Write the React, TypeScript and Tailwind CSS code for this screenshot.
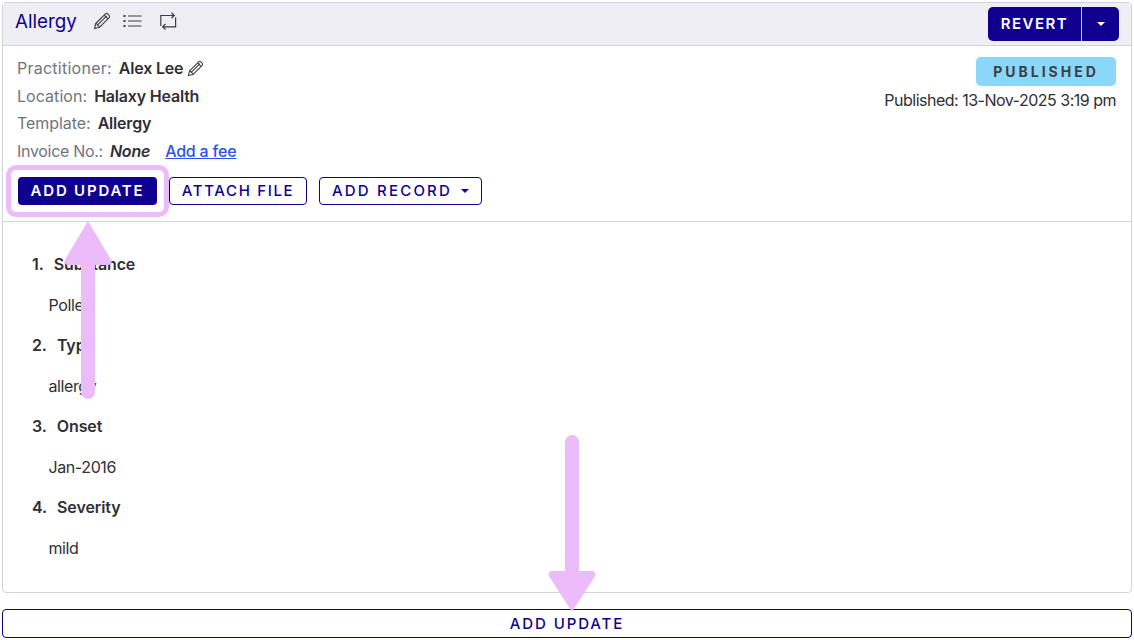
import React from 'react';

const font = { fontFamily: 'Inter, "Liberation Sans", sans-serif' };

function Pencil({ className }: { className?: string }) {
  return (
    <svg viewBox="0 0 18 18" fill="none" stroke="currentColor" strokeWidth="1.1" strokeLinejoin="round" className={className}>
      <path d="M1.5 16.5l1.2-5L12.4 1.900a1.600 1.600 0 0 1 2.200 0l1.500 1.500a1.600 1.600 0 0 1 0 2.200L6.500 15.300z" />
      <path d="M2.700 11.500c1 0 1.600.5 1.700 1.700 1.200.1 2 .8 2.100 2.100M4.400 13.200L13.800 3.800M11.200 3.100l3.700 3.700" />
    </svg>
  );
}

function ListIcon() {
  return (
    <svg viewBox="0 0 19 14" className="w-[19px] h-[14px] text-[#3c3c48]" fill="none" stroke="currentColor">
      <path d="M5 2h13.500M5 7h13.500M5 12h13.500" strokeWidth="1.100" />
      <path d="M0.500 2h2M0.500 7h2M0.500 12h2" strokeWidth="1.800" />
    </svg>
  );
}

function RepeatIcon() {
  return (
    <svg viewBox="0 0 17 18" className="w-[17px] h-[18px] text-[#3c3c48]" fill="none" stroke="currentColor" strokeWidth="1.200">
      <path d="M0.800 14V3.500H14M11.500 0.800l2.800 2.700-2.800 2.700" />
      <path d="M15.600 5.500v9.300H3M5.500 12l-2.800 2.800 2.800 2.700" />
    </svg>
  );
}

function Caret({ color }: { color: string }) {
  return <span className={`inline-block w-0 h-0 border-x-[4px] border-x-transparent border-t-[4px] ${color}`} />;
}

function Row({ label, labelClass, children }: { label: string; labelClass?: string; children: React.ReactNode }) {
  return (
    <div className="h-[27.500px] flex items-center text-[16px] tracking-[-0.2px]">
      <span className={`text-[#71747d] mr-[7px] ${labelClass ?? ''}`}>{label}</span>
      {children}
    </div>
  );
}

const outlineBtn = 'h-[28px] rounded-[4px] border border-[#100090] bg-white text-[#100090] text-[15px] font-medium flex items-center justify-center';

const fields = [
  { n: '1.', label: 'Substance', value: 'Pollen' },
  { n: '2.', label: 'Type', value: 'allergy' },
  { n: '3.', label: 'Onset', value: 'Jan-2016' },
  { n: '4.', label: 'Severity', value: 'mild' },
];

export default function App() {
  return (
    <div style={font} className="relative w-[1134px] h-[640px] overflow-hidden bg-white text-[#2f2f35] px-[2px] pt-[2px]">
      <div className="h-[591px] rounded-[4px] border border-[#d0d4dc] flex flex-col">
        {/* Header */}
        <div className="h-[43px] shrink-0 bg-[#eeeef4] border-b border-[#d0d4dc] flex items-center justify-between pl-[12px] pr-[12px]">
          <div className="flex items-center -mt-[4px]">
            <h1 className="text-[18.800px] text-[#100090] mr-[16px]">Allergy</h1>
            <div className="flex items-center -mt-[3px]">
              <Pencil className="w-[18px] h-[18px] text-[#3c3c48] mr-[12px]" />
              <ListIcon />
              <span className="w-[18px]" />
              <RepeatIcon />
            </div>
          </div>
          <div className="h-[34px] w-[131px] rounded-[5px] bg-[#100090] text-white flex items-center">
            <span className="w-[93px] text-center text-[15px] font-semibold tracking-[1.500px]">REVERT</span>
            <span className="w-px h-full bg-[#c9c9e6]" />
            <span className="flex-1 flex justify-center"><Caret color="border-t-white" /></span>
          </div>
        </div>

        {/* Meta */}
        <div className="h-[176px] shrink-0 border-b border-[#d0d4dc] pl-[14px] pr-[15px] pt-[8.500px]">
          <div className="flex justify-between">
            <div>
              <Row label="Practitioner:" labelClass="tracking-[0.25px]">
                <b className="font-semibold">Alex Lee</b>
                <Pencil className="w-[17px] h-[17px] ml-[4px] text-[#3c3c48]" />
              </Row>
              <Row label="Location:" labelClass="tracking-[0.05px]"><b className="font-semibold">Halaxy Health</b></Row>
              <Row label="Template:" labelClass="tracking-[-0.05px]"><b className="font-semibold">Allergy</b></Row>
              <Row label="Invoice No.:" labelClass="tracking-[-0.3px]">
                <b className="font-semibold italic mr-[15px]">None</b>
                <a className="text-[#2f50f0] underline font-medium">Add a fee</a>
              </Row>
            </div>
            <div className="flex flex-col items-end">
              <div className="h-[29px] w-[140px] rounded-[5px] bg-[#8bd7fa] flex items-center justify-center text-[14px] font-bold tracking-[3px] text-[#3a3f46] mt-[2.500px]">
                PUBLISHED
              </div>
              <div className="text-[16px] tracking-[-0.5px] mt-[2px]">Published: 13-Nov-2025 3:19 pm</div>
            </div>
          </div>
          <div className="flex gap-[12px] mt-[12.500px]">
            <div className="h-[28px] w-[139px] ml-[1px] rounded-[4px] bg-[#100090] text-white text-[15px] font-semibold tracking-[1.800px] flex items-center justify-center">ADD UPDATE</div>
            <div className={`${outlineBtn} w-[138px] tracking-[1.650px]`}>ATTACH FILE</div>
            <div className={`${outlineBtn} w-[163px] gap-[9px] tracking-[2.200px]`}>ADD RECORD <Caret color="border-t-[#100090]" /></div>
          </div>
        </div>

        {/* Body */}
        <div className="flex-1 pl-[29px] pt-[22px]">
          {fields.map((f) => (
            <div key={f.n}>
              <div className="h-[40.500px] flex items-center text-[16px] font-semibold tracking-[-0.1px]">
                <span className="mr-[10px]">{f.n}</span>{f.label}
              </div>
              <div className="h-[40.500px] flex items-center pl-[16.500px] text-[16px] tracking-[-0.4px]">{f.value}</div>
            </div>
          ))}
        </div>
      </div>

      <div className={`${outlineBtn} mt-[16px] w-full h-[29px] pt-[1px] tracking-[1.900px]`}>ADD UPDATE</div>

      {/* Annotation overlay */}
      <div className="absolute left-[6px] top-[165px] w-[163px] h-[52px] rounded-[10px] border-[5px] border-[#ebbcf9]" />
      <svg className="absolute left-[60px] top-[218px] w-[56px] h-[184px]" viewBox="0 0 56 184" fill="#ebbcf9">
        <path d="M21 40h14v134a7 7 0 0 1-14 0z" />
        <path d="M28 5L50 42a2.500 2.500 0 0 1-2 4H8a2.500 2.500 0 0 1-2-4z" stroke="#ebbcf9" strokeWidth="2" strokeLinejoin="round" />
      </svg>
      <svg className="absolute left-[544px] top-[432px] w-[56px] h-[184px]" viewBox="0 0 56 184" fill="#ebbcf9">
        <path d="M21 10a7 7 0 0 1 14 0v135H21z" />
        <path d="M28 178L50 144a2.500 2.500 0 0 0-2-4H8a2.500 2.500 0 0 0-2 4z" stroke="#ebbcf9" strokeWidth="2" strokeLinejoin="round" />
      </svg>
    </div>
  );
}
